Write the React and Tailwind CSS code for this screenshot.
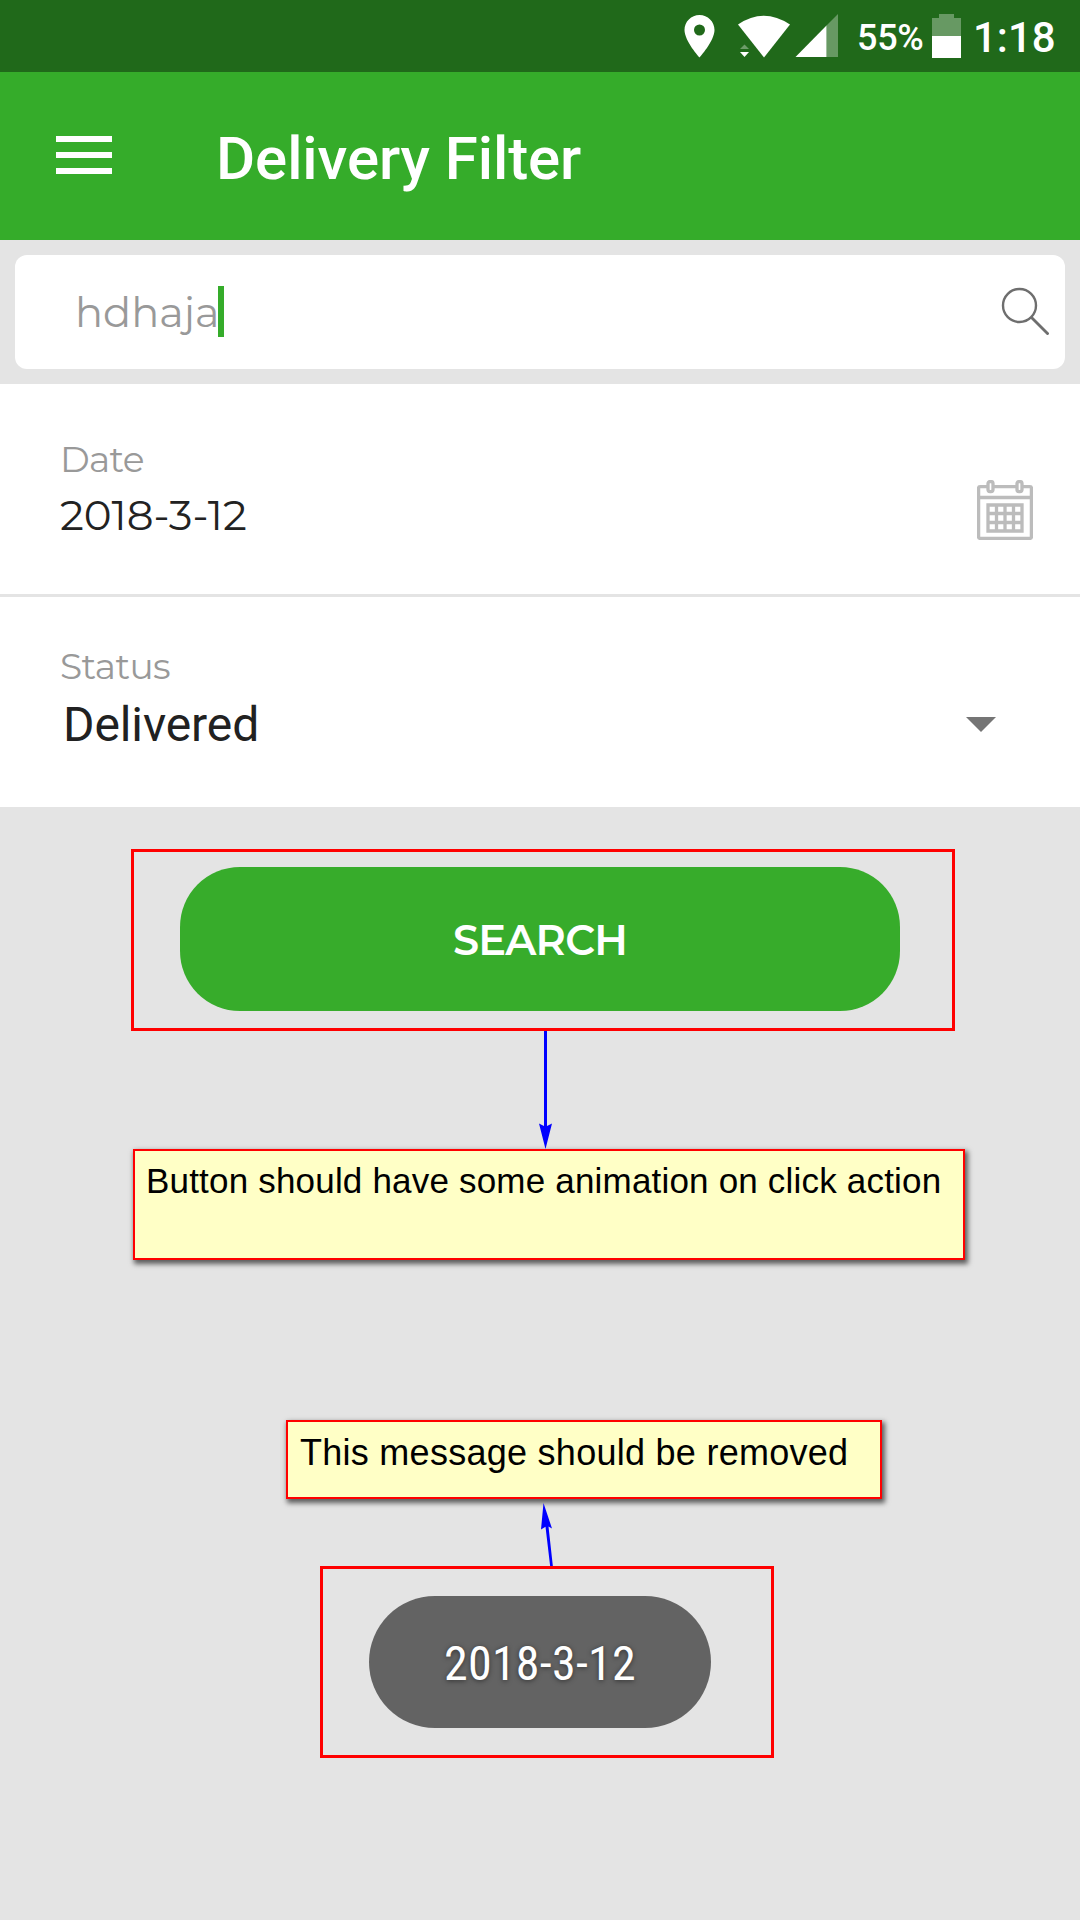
function StatusBar() {
  return (
    <header className="flex h-[72px] items-center bg-[#20691a] pt-1 font-['Roboto',sans-serif] font-medium text-white">
      <svg className="-mt-1 ml-[683px] h-[72px] w-[162px] shrink-0" viewBox="683 0 162 72" fill="#fff">
        <path fillRule="evenodd" d="M699.5 15c-8.300 0-15 6.700-15 15 0 11 15 27.500 15 27.500s15-16.500 15-27.500c0-8.300-6.700-15-15-15zm0 20.500a5.500 5.500 0 1 1 0-11 5.500 5.500 0 0 1 0 11z" />
        <path d="M738 24.500Q763.500 7 790 24.500L764 57.500z" />
        <path d="M740 49l4.500-4.500 4.500 4.500z" opacity=".35" />
        <path d="M740 52h9l-4.500 5z" />
        <path d="M826.500 25.500L838 14v43h-11.500z" opacity=".32" />
        <path d="M795.500 57L826.500 25.500V57z" />
      </svg>
      <span className="ml-3 w-[75px] text-[36px] leading-10 tracking-[-0.300px]">55%</span>
      <svg className="-mt-1 h-[72px] w-[29px] shrink-0" viewBox="932 0 29 72" fill="#fff">
        <path d="M932 36V18h7v-4h15v4h7v18z" opacity=".32" />
        <path d="M932 36h29v22h-29z" />
      </svg>
      <span className="ml-3 text-[42px] leading-10">1:18</span>
    </header>
  );
}

function TitleBar() {
  return (
    <div className="flex h-[168px] items-center bg-[#35ac2a] text-white">
      <button className="mb-0.5 ml-14 flex w-14 flex-col gap-2.5" aria-label="Menu">
        <span className="h-1.5 w-full bg-white" />
        <span className="h-1.5 w-full bg-white" />
        <span className="h-1.5 w-full bg-white" />
      </button>
      <h1 className="mt-[5px] ml-[104px] font-['Roboto',sans-serif] text-[60px] leading-[70px] font-medium tracking-[-0.080px]">Delivery Filter</h1>
    </div>
  );
}

function SearchField() {
  return (
    <div className="h-36 p-[15px]">
      <div className="flex h-[114px] items-center rounded-xl bg-white pr-4 pl-[60px]">
        <span className="w-[143px] text-[41.500px] leading-[50px] text-[#999]">hdhaja</span>
        <span className="mb-px h-[51px] w-1.5 bg-[#35ac2a]" />
        <svg className="mb-0.5 ml-auto h-12 w-12" viewBox="0 0 48 48" fill="none" stroke="#6e6e6e" strokeWidth="2.400">
          <circle cx="18.500" cy="18.500" r="16.500" />
          <path d="M30.500 30.500L47.500 47.500" strokeWidth="2.800" />
        </svg>
      </div>
    </div>
  );
}

function CalendarIcon() {
  return (
    <svg className="h-[60px] w-14" viewBox="0 0 56 60" fill="none" stroke="#bcbcbc" strokeWidth="3.300">
      <rect x="1.600" y="6.600" width="52.800" height="51.800" rx="1.500" />
      <path d="M2 17.500h52" />
      <rect x="11" y="1.600" width="5" height="10" rx="2" fill="#fff" />
      <rect x="40" y="1.600" width="5" height="10" rx="2" fill="#fff" />
      <path d="M11 25h34v26H11zM19.500 25v26M28 25v26M36.500 25v26M11 33.500h34M11 42.500h34" />
    </svg>
  );
}

function Note({ className, children }) {
  return (
    <div className={`border-2 border-[#f00] bg-[#ffffc6] font-['Liberation_Sans',Arial,sans-serif] whitespace-nowrap text-black shadow-[2px_3px_5px_1px_rgba(0,0,0,0.6)] ${className}`}>
      {children}
    </div>
  );
}

export default function App() {
  return (
    <div className="flex h-[1920px] w-[1080px] flex-col overflow-hidden bg-[#e4e4e4] font-['Montserrat','Inter',sans-serif]">
      <StatusBar />
      <TitleBar />
      <SearchField />
      <section className="flex h-[213px] items-start justify-between border-b-3 border-[#e4e4e4] bg-white pt-[55px] pr-[47px] pl-[60px]">
        <div>
          <div className="text-[36px] leading-10 tracking-[-0.700px] text-[#999]">Date</div>
          <div className="mt-[11px] text-[42px] leading-[50px] text-[#222]">2018-3-12</div>
        </div>
        <div className="mt-[41px]"><CalendarIcon /></div>
      </section>
      <section className="flex h-[210px] items-start justify-between bg-white pt-[49px] pr-[84px] pl-[60px]">
        <div>
          <div className="text-[36px] leading-10 tracking-[-0.600px] text-[#999]">Status</div>
          <div className="mt-[14px] ml-[3px] font-['Roboto',sans-serif] text-[48px] leading-[50px] tracking-[-0.100px] text-[#212121]">Delivered</div>
        </div>
        <svg className="mt-[71px] h-[15px] w-[30px]" viewBox="0 0 30 15" fill="#757575"><path d="M0 0h30L15 15z" /></svg>
      </section>

      <div className="mt-[42px] ml-[131px] h-[182px] w-[824px] shrink-0 border-3 border-[#f00] pt-[15px] pl-[46px]">
        <button className="flex h-36 w-[720px] items-center justify-center rounded-[60px] bg-[#37ac2b] pt-px text-[41.500px] leading-[50px] font-semibold tracking-[-0.800px] text-white">
          SEARCH
        </button>
      </div>
      <svg className="relative z-10 ml-[539px] h-[118px] w-[13px] shrink-0" viewBox="0 0 13 118" fill="#00f">
        <path d="M5 0h3v95l5-2.500L6.500 118 0 92.500 5 95z" />
      </svg>
      <Note className="ml-[133px] h-[111px] w-[832px] shrink-0 pt-[10px] pl-[11px] text-[35px] leading-10 tracking-[0.190px]">
        Button should have some animation on click action
      </Note>
      <Note className="mt-[160px] ml-[286px] h-[79px] w-[596px] shrink-0 pt-[11px] pl-3 text-[36px] leading-10 tracking-[0.270px]">
        This message should be removed
      </Note>
      <svg className="ml-[540px] h-[67px] w-[14px] shrink-0 overflow-visible" viewBox="0 0 14 67" fill="#00f">
        <path d="M3.500 4L12 29.500 8.500 27.500 13 68.500H10.300L5.500 27.800 1 30.500z" />
      </svg>
      <div className="ml-[320px] flex h-[192px] w-[454px] shrink-0 border-3 border-[#f00] pt-[27px] pl-[46px]">
        <div className="flex h-[132px] w-[342px] items-center justify-center rounded-full bg-[#636363] pt-1 font-['Roboto_Condensed','Roboto',sans-serif] text-[48px] leading-[56px] tracking-[0.250px] text-white [text-shadow:0_1px_5px_rgba(0,0,0,0.5)]">
          2018-3-12
        </div>
      </div>
    </div>
  );
}
